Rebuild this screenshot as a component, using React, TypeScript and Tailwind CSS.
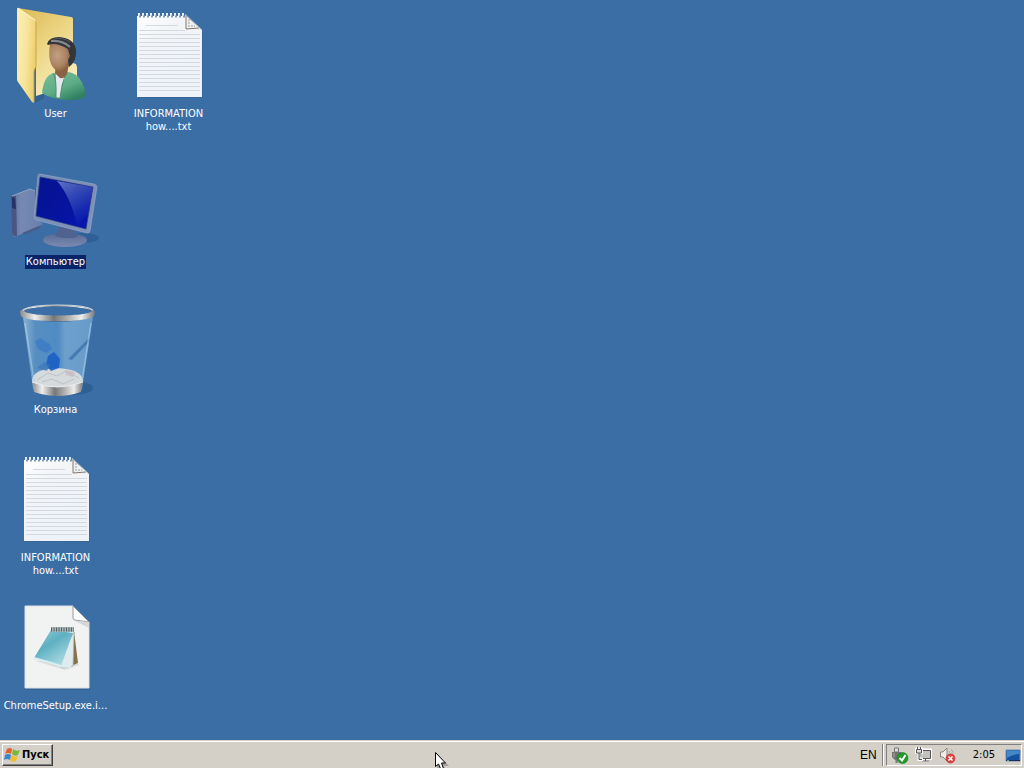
import React from "react";

type IconProps = { id: string };

function UserIcon({ id }: IconProps) {
  return (
    <svg viewBox="0 0 96 96" className="size-24 overflow-visible" aria-hidden="true">
      <defs>
        <linearGradient id={`${id}-back`} x1="0" y1="0" x2="0.6" y2="1">
          <stop offset="0" stopColor="#dcb955" />
          <stop offset="0.5" stopColor="#ecd584" />
          <stop offset="1" stopColor="#f7edbb" />
        </linearGradient>
        <linearGradient id={`${id}-front`} x1="0" y1="0" x2="1" y2="0.3">
          <stop offset="0" stopColor="#fcf1b9" />
          <stop offset="0.6" stopColor="#f8e39a" />
          <stop offset="1" stopColor="#eed06e" />
        </linearGradient>
        <radialGradient id={`${id}-face`} cx="0.35" cy="0.45" r="0.7">
          <stop offset="0" stopColor="#c3a184" />
          <stop offset="0.55" stopColor="#a98261" />
          <stop offset="1" stopColor="#75492c" />
        </radialGradient>
        <linearGradient id={`${id}-body`} x1="0" y1="0" x2="0.7" y2="1">
          <stop offset="0" stopColor="#7cbf98" />
          <stop offset="0.6" stopColor="#5dac86" />
          <stop offset="1" stopColor="#2f7f60" />
        </linearGradient>
      </defs>
      <path d="M27 97L36 92V78L28 80Z" fill="#274f7d" opacity="0.45" />
      <path d="M10 2L63 11Q65 11 65 13V57L68 58L69 61V77L28 90V16Z" fill={`url(#${id}-back)`} />
      <path d="M10 2L27 14Q28 15 28 17V61Q26 63 26 66V97L24 96L10 76Q9 75 9 73V3Q9 2 10 2Z" fill={`url(#${id}-front)`} />
      <path d="M28 16V61Q26 63 26 66V96" fill="none" stroke="#c79c35" strokeWidth="0.8" />
      <path d="M10 2L27 14" stroke="#fff8d4" strokeWidth="1" />
      <path d="M34 87C35 77 38 69 46 67L60 66C70 67 76 76 78 90Q75 94 62 94Q42 93 34 87Z" fill={`url(#${id}-body)`} />
      <path d="M48 68L57 72L54 78L52 92L48 91Z" fill="#e2e9ea" />
      <path d="M45 67Q49 74 48 91M58 68Q54 76 52 92" fill="none" stroke="#47836a" strokeWidth="0.8" />
      <path d="M48 58H61L59 68Q56 73 52 72L47 67Z" fill="#8a6142" />
      <path d="M42 38Q40 51 43 58Q48 68 56 65Q64 60 65 43L61 36Z" fill={`url(#${id}-face)`} />
      <path d="M39 38Q41 31 51 31Q66 32 68 44Q69 55 61 61L60 54L62 50L60 43Q48 36 40 39Z" fill="#333538" />
      <path d="M43 35Q54 34 62 41" fill="none" stroke="#85898e" strokeWidth="2" />
      <path d="M46 33Q55 31 62 36" fill="none" stroke="#515a63" strokeWidth="1" />
    </svg>
  );
}

function TextFileIcon({ id }: IconProps) {
  return (
    <svg viewBox="0 0 96 96" className="size-24" aria-hidden="true">
      <defs>
        <linearGradient id={`${id}-page`} x1="0" y1="0" x2="0.5" y2="1">
          <stop offset="0" stopColor="#ffffff" />
          <stop offset="0.3" stopColor="#f3f5f7" />
          <stop offset="1" stopColor="#eef2f9" />
        </linearGradient>
      </defs>
      <path d="M17 11H66L82 26V92H17Z" fill="#27527f" opacity="0.25" />
      <path d="M16 10H65L81 24V91H16Z" fill={`url(#${id}-page)`} />
      <path d="M17 8.500H65" stroke="#e7eef5" strokeWidth="3" strokeDasharray="2 2" />
      <path d="M18 10.500H65" stroke="#8199b3" strokeWidth="2" strokeDasharray="2 2" />
      <path d="M25 19.500H57M18 24.500H64M18 28.500H79M18 32.500H79M18 36.500H79M18 40.500H79M18 44.500H79M18 48.500H79M18 52.500H79M18 56.500H79M18 60.500H79M18 64.500H79M18 68.500H79M18 72.500H79M18 76.500H79M18 80.500H79M18 84.500H79" stroke="#d4d8e1" strokeWidth="1" />
      <path d="M64 9L81 24L65 23Z" fill="#eef0f1" />
      <path d="M65 10V23L78 22" fill="none" stroke="#83786f" strokeWidth="1" />
      <path d="M64 8L81 24" stroke="#a7b3c0" strokeWidth="1" />
      <path d="M67 14H69M67 17H70M67 20H74" fill="none" stroke="#9e9a9d" strokeWidth="1" strokeDasharray="2 1" />
    </svg>
  );
}

function ComputerIcon({ id }: IconProps) {
  return (
    <svg viewBox="0 0 96 96" className="size-24 overflow-visible" aria-hidden="true">
      <defs>
        <linearGradient id={`${id}-screen`} x1="0" y1="0" x2="1" y2="1">
          <stop offset="0" stopColor="#051391" />
          <stop offset="0.5" stopColor="#06139c" />
          <stop offset="1" stopColor="#0717b4" />
        </linearGradient>
        <linearGradient id={`${id}-glare`} x1="0" y1="0" x2="0.5" y2="1">
          <stop offset="0" stopColor="#6f86cb" stopOpacity="0.85" />
          <stop offset="0.6" stopColor="#3a53bd" stopOpacity="0.6" />
          <stop offset="1" stopColor="#233fc8" stopOpacity="0.1" />
        </linearGradient>
        <linearGradient id={`${id}-metal`} x1="0" y1="0" x2="1" y2="1">
          <stop offset="0" stopColor="#768cb4" />
          <stop offset="1" stopColor="#8292bb" />
        </linearGradient>
        <linearGradient id={`${id}-tower`} x1="0" y1="0" x2="1" y2="0">
          <stop offset="0" stopColor="#5b6b96" />
          <stop offset="0.3" stopColor="#7689b2" />
          <stop offset="1" stopColor="#6980ac" />
        </linearGradient>
        <linearGradient id={`${id}-base`} x1="0" y1="0" x2="0" y2="1">
          <stop offset="0" stopColor="#566994" />
          <stop offset="1" stopColor="#7d8bb3" />
        </linearGradient>
      </defs>
      <ellipse cx="75" cy="84" rx="16" ry="5" fill="#25568c" opacity="0.55" />
      <path d="M3 42L22 35L27 37V64L35 70L7 83Q4 82 4 80Z" fill={`url(#${id}-tower)`} />
      <path d="M3 42L8 42L9 82L6 82L4 79Z" fill="#4a5681" />
      <path d="M4 43L7 44L8 55L4 54Z" fill="#273163" />
      <path d="M4 42L22 35L27 37" fill="none" stroke="#91a4c2" strokeWidth="1" />
      <path d="M14 79L31 72L33 74L18 80Z" fill="#4b5c87" />
      <ellipse cx="57" cy="86" rx="22" ry="7" fill={`url(#${id}-base)`} />
      <path d="M52 71L68 76L69 83Q59 86 47 82Z" fill="#4f6290" />
      <path d="M32 20Q30 20 30 22L26 63Q26 65 28 66L79 79Q82 79 82 77L89 33Q89 31 86 30Z" fill={`url(#${id}-metal)`} stroke="#91a5c6" strokeWidth="0.7" />
      <path d="M32 23L85 33L78 75L28 62Z" fill={`url(#${id}-screen)`} />
      <path d="M49 27L85 33L81 59L69 72Q63 43 49 27Z" fill={`url(#${id}-glare)`} />
      <path d="M32 23L85 33L78 75L28 62Z" fill="none" stroke="#293d80" strokeWidth="0.7" />
    </svg>
  );
}

function RecycleIcon({ id }: IconProps) {
  return (
    <svg viewBox="0 0 96 96" className="size-24 overflow-visible" aria-hidden="true">
      <defs>
        <linearGradient id={`${id}-glass`} x1="0" y1="0" x2="1" y2="0">
          <stop offset="0" stopColor="#a9cae4" stopOpacity="0.75" />
          <stop offset="0.18" stopColor="#6ba4d3" stopOpacity="0.6" />
          <stop offset="0.5" stopColor="#5c9ed8" stopOpacity="0.6" />
          <stop offset="0.6" stopColor="#8bbbe2" stopOpacity="0.65" />
          <stop offset="1" stopColor="#80b3dd" stopOpacity="0.65" />
        </linearGradient>
        <linearGradient id={`${id}-metal`} x1="0" y1="0" x2="1" y2="0">
          <stop offset="0" stopColor="#8b8b8c" />
          <stop offset="0.2" stopColor="#f0efed" />
          <stop offset="0.45" stopColor="#777778" />
          <stop offset="0.65" stopColor="#b5b4b3" />
          <stop offset="0.82" stopColor="#eeeeed" />
          <stop offset="1" stopColor="#777779" />
        </linearGradient>
      </defs>
      <ellipse cx="65" cy="86" rx="20" ry="7" fill="#204a77" opacity="0.4" />
      <path d="M15 15L25 87Q50 98 74 87L85 15Q50 25 15 15Z" fill={`url(#${id}-glass)`} />
      <path d="M24 78Q25 67 49 66Q73 67 75 78L73 88Q50 96 26 87Z" fill="#d5dadd" />
      <path d="M29 78L40 71L49 74L58 69L71 76M34 80L44 77L55 82L66 77" fill="none" stroke="#bdc2c6" strokeWidth="1" />
      <path d="M57 68L67 70L65 75L58 73Z" fill="#c5b9c0" opacity="0.7" />
      <path d="M27 39L33 36L38 40L42 42L44 47L38 51L30 47Z" fill="#397ac4" opacity="0.75" />
      <path d="M40 54L46 50L52 57L51 66L43 69L38 63Z" fill="#1b5ec8" opacity="0.9" />
      <path d="M29 66L36 60L42 63L39 69Z" fill="#3e75b5" opacity="0.65" />
      <path d="M60 57L82 35L81 40L64 58Z" fill="#316ba5" opacity="0.65" />
      <path d="M17 21L27 85M83 21L73 85" stroke="#b4d8f0" strokeWidth="1.500" opacity="0.5" />
      <path d="M24 80Q49 90 75 80L73 90Q50 98 26 90Z" fill={`url(#${id}-metal)`} />
      <path d="M24 80Q49 90 75 80" fill="none" stroke="#ebeced" strokeWidth="1" />
      <path fillRule="evenodd" d="M12 10C12 1 87 1 87 10L86 14C81 21 18 21 13 14ZM16 9C20 15 80 15 84 9C78 3 20 3 16 9Z" fill={`url(#${id}-metal)`} />
      <path d="M15 8Q21 3 50 3Q79 3 85 8" fill="none" stroke="#d5d9dc" strokeWidth="1" />
    </svg>
  );
}

function SettingsFileIcon({ id }: IconProps) {
  return (
    <svg viewBox="0 0 96 96" className="size-24" aria-hidden="true">
      <defs>
        <linearGradient id={`${id}-cover`} x1="0" y1="0" x2="0.7" y2="1">
          <stop offset="0" stopColor="#93cfda" />
          <stop offset="0.45" stopColor="#5eb0c2" />
          <stop offset="1" stopColor="#b0dee5" />
        </linearGradient>
      </defs>
      <path d="M17 9H66L82 25V92H17Z" fill="#27527f" opacity="0.35" />
      <path d="M17 8H65L81 24V90H17Z" fill="#f1f2f2" stroke="#dce2e7" strokeWidth="1" />
      <path d="M65 8L81 24L67 22Q65 22 65 20Z" fill="#fff" stroke="#949ca5" strokeWidth="1" />
      <path d="M67 23L81 24V30Z" fill="#d5d7d8" />
      <path d="M28 63L57 72L71 67L66 61Z" fill="#a6a9a6" opacity="0.3" />
      <path d="M66 33L70 65L63 68L62 60Z" fill="#86734d" />
      <path d="M66 34L65 68L54 70L48 64Z" fill="#dfebed" stroke="#a7b6b8" strokeWidth="0.7" />
      <path d="M43 32L65 35L53 68Q40 63 26 60Z" fill={`url(#${id}-cover)`} />
      <path d="M26 60Q41 64 53 68L63 69" fill="none" stroke="#d8edf0" strokeWidth="2" />
      <path d="M43 31.500H66" stroke="#a8b7b9" strokeWidth="5" />
      <path d="M43 31.500H66" stroke="#555f61" strokeWidth="4" strokeDasharray="1 1.500" />
    </svg>
  );
}

type DesktopItem = {
  id: string;
  label: string[];
  Icon: (props: IconProps) => React.JSX.Element;
  selected?: boolean;
};

const items: DesktopItem[] = [
  { id: "user", label: ["User"], Icon: UserIcon },
  { id: "computer", label: ["Компьютер"], Icon: ComputerIcon, selected: true },
  { id: "recycle", label: ["Корзина"], Icon: RecycleIcon },
  { id: "info", label: ["INFORMATION", "how....txt"], Icon: TextFileIcon },
  { id: "chrome", label: ["ChromeSetup.exe.i..."], Icon: SettingsFileIcon },
  { id: "info-copy", label: ["INFORMATION", "how....txt"], Icon: TextFileIcon },
];

function DesktopShortcut({ id, label, Icon, selected }: DesktopItem) {
  return (
    <button type="button" className="flex h-[148px] w-[111px] flex-col items-center gap-[5px] pt-1.5 text-[11px] leading-[13px] text-white">
      <Icon id={id} />
      <span className={selected ? "bg-[#0a246a] px-px pb-px" : "px-px pb-px"}>
        {label.map((line) => (
          <span key={line} className="block whitespace-nowrap">{line}</span>
        ))}
      </span>
    </button>
  );
}

function WindowsLogo() {
  return (
    <svg viewBox="0 0 16 16" className="size-4" aria-hidden="true">
      <path d="M3 2Q6 0 8 2L7 7Q4 5 1 7Z" fill="#e3602f" />
      <path d="M9 2Q12 5 16 3L14 8Q11 10 8 7Z" fill="#78b83b" />
      <path d="M1 8Q4 6 7 8L6 13Q3 11 0 13Z" fill="#3987d0" />
      <path d="M8 8Q11 11 14 9L12 14Q9 16 6 13Z" fill="#f5bd29" />
    </svg>
  );
}

function SafeRemoveIcon() {
  return (
    <svg viewBox="0 0 18 18" className="size-[18px]" aria-hidden="true">
      <path d="M3.500 2H7.500V6H3.500Z" fill="#ddd" stroke="#777" />
      <path d="M1 6H10V11L8 14H4L1 11Z" fill="#737373" />
      <path d="M3 7V11" stroke="#aaa" />
      <path d="M5.500 13V17" stroke="#777" strokeWidth="2" />
      <circle cx="11.500" cy="12" r="5.500" fill="#239b2c" stroke="#137818" strokeWidth="0.6" />
      <path d="M8.500 12L11 14.500L14.500 9" fill="none" stroke="white" strokeWidth="2" />
    </svg>
  );
}

function NetworkIcon() {
  return (
    <svg viewBox="0 0 18 18" className="size-[18px]" aria-hidden="true">
      <path d="M5 4H15.500V12.500H5ZM7 14.500H14" fill="none" stroke="#fff" strokeWidth="3" />
      <path d="M5.500 4.500H15.500V12.500H5.500Z" fill="#c3c2be" stroke="#555" />
      <path d="M7 15H14M10.500 13V15" stroke="#555" />
      <path d="M1.500 3V6.500H6.500V3ZM4 6V13.500H8" fill="none" stroke="#fff" strokeWidth="3" />
      <path d="M1.500 3.500H6.500V7H1.500ZM2.500 1V3M5.500 1V3M4 7V13.500H7" fill="#ddd" stroke="#555" />
    </svg>
  );
}

function MutedIcon() {
  return (
    <svg viewBox="0 0 18 18" className="size-[18px]" aria-hidden="true">
      <path d="M1.500 6H4L8 2V15L4 11H1.500Z" fill="#f0eeeb" stroke="#88837e" />
      <path d="M10 5Q12 7 11 10M12 3Q15 6 14 9" fill="none" stroke="#aaa" />
      <circle cx="11.500" cy="12.500" r="4.500" fill="#db4444" stroke="#bd2323" strokeWidth="0.6" />
      <path d="M9.500 10.500L13.500 14.500M13.500 10.500L9.500 14.500" stroke="white" strokeWidth="1.500" />
    </svg>
  );
}

function ShowDesktopIcon() {
  return (
    <svg viewBox="0 0 16 16" className="size-4" aria-hidden="true">
      <path d="M1 3H15V14H1Z" fill="#1553a0" stroke="#6990bc" />
      <path d="M2 4H14V7Q9 7 2 11Z" fill="#4488c8" />
      <path d="M1 13.500H15" stroke="#182e55" />
      <path d="M2 13.500H4" stroke="#72a6a0" />
    </svg>
  );
}

export default function App() {
  return (
    <div className="relative flex min-h-screen flex-col overflow-hidden bg-[#3a6ea5] font-[Tahoma,'DejaVu_Sans_Condensed','Noto_Sans',sans-serif]">
      <main className="flex-1">
        <div className="grid w-fit grid-flow-col grid-rows-5 gap-x-0.5">
          {items.map((item) => (
            <DesktopShortcut key={item.id} {...item} />
          ))}
        </div>
      </main>
      <footer className="flex h-7 items-center justify-between border-t border-[#d4d0c8] bg-[#d4d0c8] pr-0.5 pl-0.5 text-[11px] text-black shadow-[inset_0_1px_0_#fff]">
        <button type="button" className="mt-px flex h-[22px] items-center gap-0.5 border border-t-white border-r-[#404040] border-b-[#404040] border-l-white pr-[3px] pl-px font-bold shadow-[inset_-1px_-1px_0_#808080]">
          <WindowsLogo />
          Пуск
        </button>
        <div className="mt-px flex h-[22px] items-center">
          <button type="button" className="mr-[5px] font-['Liberation_Sans',sans-serif] text-[12px]">EN</button>
          <div className="flex h-[22px] items-center border-l border-[#808080] shadow-[inset_1px_0_0_#fff] pl-[3px]">
            <div className="flex h-[22px] items-center border border-t-[#808080] border-r-white border-b-white border-l-[#808080] pl-1">
              <button type="button" aria-label="Безопасное извлечение" className="mr-1.5"><SafeRemoveIcon /></button>
              <button type="button" aria-label="Сеть" className="mr-1.5"><NetworkIcon /></button>
              <button type="button" aria-label="Громкость" className="mr-4"><MutedIcon /></button>
              <time className="mr-2.5">2:05</time>
              <button type="button" aria-label="Свернуть все окна"><ShowDesktopIcon /></button>
            </div>
          </div>
        </div>
      </footer>
      <svg viewBox="0 0 14 22" className="pointer-events-none absolute bottom-[-5px] left-[434px] h-[22px] w-3.5 overflow-visible" aria-hidden="true">
        <path d="M3 3V19L7 15.500L10 21L12 20L10 15H15Z" fill="#555" opacity="0.4" />
        <path d="M1.500 1.500V15.500L4.500 13L7 18.500L9.500 17.500L7.500 12H11.500Z" fill="white" stroke="black" />
      </svg>
    </div>
  );
}
